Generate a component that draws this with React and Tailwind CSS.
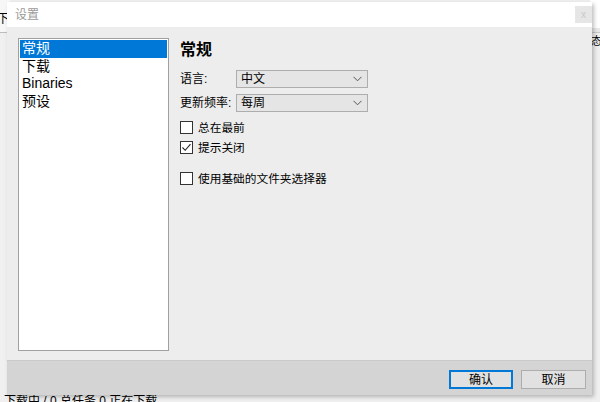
import React from "react";

const FONT = { fontFamily: '"Liberation Sans", "Noto Sans CJK SC", sans-serif' };

function Chevron() {
  return (
    <svg width="9" height="6" viewBox="0 0 9 6" className="shrink-0">
      <path d="M0.5 0.8 L4.5 4.8 L8.5 0.8" fill="none" stroke="#555" strokeWidth="1" />
    </svg>
  );
}

function Select({ value }) {
  return (
    <div className="flex h-[18px] w-[132px] items-center justify-between border border-[#adadad] bg-[#e5e5e5] pl-[4px] pr-[5px] text-[12px] leading-none text-black">
      <span>{value}</span>
      <Chevron />
    </div>
  );
}

function Checkbox({ label, checked }) {
  return (
    <div className="flex items-center gap-[5px] text-[11.7px] leading-none text-black">
      <div className="flex h-[13px] w-[13px] items-center justify-center border border-[#333] bg-white">
        {checked && (
          <svg width="11" height="11" viewBox="0 0 11 11">
            <path d="M1.5 5.5 L4.2 8.3 L9.5 2.2" fill="none" stroke="#222" strokeWidth="1.1" />
          </svg>
        )}
      </div>
      <span>{label}</span>
    </div>
  );
}

export default function App() {
  const items = ["常规", "下载", "Binaries", "预设"];
  return (
    <div className="relative h-[402px] w-[600px] overflow-hidden bg-[#f0f0f0]" style={FONT}>
      {/* main window underneath */}
      <div className="flex h-full flex-col">
        <div className="flex h-[48px] justify-between">
          <div className="flex w-[10px] flex-col">
            <div className="h-[33px] border-b border-[#bdbdbd] bg-[#f7f7f7] pt-[12px] text-[12px] leading-[14px]">
              <span className="-ml-[3px]">下</span>
            </div>
          </div>
          <div className="flex w-[10px] flex-col items-end">
            <div className="h-[28px] w-full bg-white" />
            <div className="h-[5px] w-full border-b border-[#c8c8c8] bg-[#e8e8e8]" />
            <div className="pt-[2px] text-[11px] leading-[12px]">
              <span className="-mr-[2px]">态</span>
            </div>
          </div>
        </div>
        <div className="flex-1" />
        <div className="h-[8px] pl-[4px] text-[12px] leading-[14px] text-black">下载中 / 0 总任务 0 正在下载</div>
      </div>

      {/* settings dialog */}
      <div className="absolute left-[7px] top-[2px] flex h-[393px] w-[585px] flex-col shadow-[2px_2px_4px_rgba(0,0,0,0.25)]">
        <div className="flex h-[25px] items-center justify-between bg-white pl-[8px] pr-0">
          <span className="text-[12px] text-[#9a9a9a]">设置</span>
          <div className="flex h-[17px] w-[17px] items-center justify-center bg-[#e6e6e6] text-[10px] leading-none text-[#c9c9c9]">x</div>
        </div>

        <div className="flex flex-1 gap-[11px] bg-[#ededed] pb-[9px] pl-[11px] pt-[11px]">
          <div className="flex w-[151px] flex-col border border-[#a0a0a0] bg-white p-[1px] text-[14px] leading-[17.5px] text-black">
            {items.map((it, i) => (
              <div key={it} className={i === 0 ? "bg-[#0078d7] pl-[2px] text-white" : "pl-[2px]"}>
                {it}
              </div>
            ))}
          </div>

          <div className="flex flex-col pt-[2px]">
            <div className="text-[16px] font-bold leading-[20px] text-black">常规</div>
            <div className="mt-[10px] flex flex-col gap-[6px]">
              <div className="flex items-center">
                <span className="w-[56px] text-[12px] text-black">语言:</span>
                <Select value="中文" />
              </div>
              <div className="flex items-center">
                <span className="w-[56px] text-[12px] text-black">更新频率:</span>
                <Select value="每周" />
              </div>
            </div>
            <div className="mt-[9px] flex flex-col gap-[7px]">
              <Checkbox label="总在最前" />
              <Checkbox label="提示关闭" checked />
            </div>
            <div className="mt-[18px]">
              <Checkbox label="使用基础的文件夹选择器" />
            </div>
          </div>
        </div>

        <div className="flex h-[35px] items-start justify-end gap-[8px] border-t border-[#cacaca] bg-[#d4d4d4] pr-[6px] pt-[9px]">
          <button className="flex h-[19px] w-[64px] items-center justify-center border-2 border-[#0078d7] bg-[#e1e1e1] text-[12px] leading-none text-black">确认</button>
          <button className="flex h-[19px] w-[65px] items-center justify-center border border-[#adadad] bg-[#e1e1e1] text-[12px] leading-none text-black">取消</button>
        </div>
      </div>
    </div>
  );
}
